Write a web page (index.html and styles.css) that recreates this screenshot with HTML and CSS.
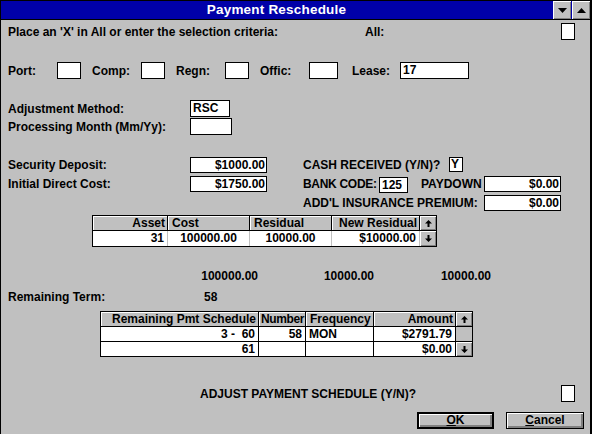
FILE: index.html
```html
<!DOCTYPE html>
<html lang="en">
<head>
    <meta charset="UTF-8">
    <title>Payment Reschedule</title>
    <link rel="stylesheet" href="styles.css">
</head>
<body>
<div class="window">
    <div class="titlebar">
        <div class="title">Payment Reschedule</div>
        <div class="tb-btn">
            <svg width="9" height="5" viewBox="0 0 9 5"><path d="M0 0H9L4.5 5Z" fill="#000"/></svg>
        </div>
        <div class="tb-btn">
            <svg width="9" height="5" viewBox="0 0 9 5"><path d="M0 5H9L4.5 0Z" fill="#000"/></svg>
        </div>
    </div>

    <div class="content">
        <div class="row r-criteria">
            <span class="lbl w-criteria">Place an 'X' in All or enter the selection criteria:</span>
            <span class="lbl w-all">All:</span>
            <span class="field f-check"></span>
        </div>

        <div class="row r-keys">
            <span class="lbl w-key">Port:</span><span class="field f-small"></span>
            <span class="lbl w-key">Comp:</span><span class="field f-small"></span>
            <span class="lbl w-key">Regn:</span><span class="field f-small"></span>
            <span class="lbl w-key">Offic:</span><span class="field f-offic"></span>
            <span class="lbl w-lease">Lease:</span><span class="field f-lease">17</span>
        </div>

        <div class="row r-method">
            <span class="lbl w-left">Adjustment Method:</span><span class="field f-method">RSC</span>
        </div>
        <div class="row r-month">
            <span class="lbl w-left">Processing Month (Mm/Yy):</span><span class="field f-month"></span>
        </div>

        <div class="row r-deposit">
            <span class="lbl w-left">Security Deposit:</span><span class="field f-money">$1000.00</span>
            <span class="lbl w-cash">CASH RECEIVED (Y/N)?</span><span class="field f-yn">Y</span>
        </div>
        <div class="row r-direct">
            <span class="lbl w-left">Initial Direct Cost:</span><span class="field f-money">$1750.00</span>
            <span class="lbl w-bank">BANK CODE:</span><span class="field f-bank">125</span>
            <span class="lbl w-paydown">PAYDOWN</span><span class="field f-money">$0.00</span>
        </div>
        <div class="row r-insurance">
            <span class="lbl w-ins">ADD'L INSURANCE PREMIUM:</span><span class="field f-money f-ins">$0.00</span>
        </div>

        <div class="grid grid-assets">
            <div class="hcell right">Asset</div>
            <div class="hcell">Cost</div>
            <div class="hcell">Residual</div>
            <div class="hcell right">New Residual</div>
            <div class="sbtn"><svg width="7" height="7" viewBox="0 0 7 7"><path d="M3.5 0L7 3.5H4.5V7H2.5V3.5H0Z" fill="#000"/></svg></div>

            <div class="dcell right">31</div>
            <div class="dcell center">100000.00</div>
            <div class="dcell center">10000.00</div>
            <div class="dcell right">$10000.00</div>
            <div class="sbtn"><svg width="7" height="7" viewBox="0 0 7 7"><path d="M3.5 7L7 3.5H4.5V0H2.5V3.5H0Z" fill="#000"/></svg></div>
        </div>

        <div class="row r-totals">
            <span class="tot tot-cost">100000.00</span>
            <span class="tot tot-res">10000.00</span>
            <span class="tot tot-new">10000.00</span>
        </div>
        <div class="row r-term">
            <span class="lbl w-term">Remaining Term:</span><span class="lbl">58</span>
        </div>

        <div class="grid grid-sched">
            <div class="hcell right">Remaining Pmt Schedule</div>
            <div class="hcell right tight">Number</div>
            <div class="hcell">Frequency</div>
            <div class="hcell right">Amount</div>
            <div class="sbtn"><svg width="7" height="7" viewBox="0 0 7 7"><path d="M3.5 0L7 3.5H4.5V7H2.5V3.5H0Z" fill="#000"/></svg></div>

            <div class="dcell right pre">3 -  60</div>
            <div class="dcell right">58</div>
            <div class="dcell">MON</div>
            <div class="dcell right">$2791.79</div>
            <div class="strack"></div>

            <div class="dcell right">61</div>
            <div class="dcell"></div>
            <div class="dcell"></div>
            <div class="dcell right">$0.00</div>
            <div class="sbtn"><svg width="7" height="7" viewBox="0 0 7 7"><path d="M3.5 7L7 3.5H4.5V0H2.5V3.5H0Z" fill="#000"/></svg></div>
        </div>

        <div class="row r-adjust">
            <span class="lbl w-adjust">ADJUST PAYMENT SCHEDULE (Y/N)?</span>
            <span class="field f-check"></span>
        </div>

        <div class="row r-buttons">
            <button class="btn btn-default"><u>O</u>K</button>
            <button class="btn"><u>C</u>ancel</button>
        </div>
    </div>
</div>
</body>
</html>
```

FILE: styles.css
```css
body {
    margin: 0;
    background-color: #c0c0c0;
    font-family: "Liberation Sans", Arial, sans-serif;
    font-weight: bold;
    font-size: 12px;
    color: #000;
}
.window {
    width: 592px;
    height: 434px;
    box-sizing: border-box;
    border-top: 1px solid #000;
    border-left: 1px solid #000;
    border-right: 2px solid #000;
    background-color: #c0c0c0;
    overflow: hidden;
}

/* title bar */
.titlebar {
    display: flex;
    height: 18px;
    background-color: #0000a8;
    border-bottom: 1px solid #000;
}
.title {
    flex: 1;
    text-align: center;
    color: #fff;
    font-size: 13.5px;
    line-height: 18px;
    letter-spacing: 0.2px;
}
.tb-btn {
    width: 18px;
    height: 18px;
    box-sizing: border-box;
    margin-left: 1px;
    background-color: #c0c0c0;
    box-shadow: inset 1px 1px 0 #fff, inset -1px -1px 0 #808080;
    display: flex;
    align-items: center;
    justify-content: center;
}

/* content rows */
.content {
    padding-left: 7px;
}
.row {
    display: flex;
    align-items: center;
    white-space: nowrap;
}
.lbl {
    flex-shrink: 0;
}
.field {
    flex-shrink: 0;
    box-sizing: border-box;
    height: 17px;
    line-height: 15px;
    background-color: #fff;
    border: 1px solid #000;
    padding: 0 2px;
}

.r-criteria { margin-top: 3px; height: 17px; }
.w-criteria { width: 357px; }
.w-all { width: 196px; }
.f-check { width: 14px; }

.r-keys { margin-top: 22px; height: 17px; }
.w-key { width: 49px; }
.w-key + .field { margin-right: 11px; }
.f-small { width: 24px; }
.w-key + .f-offic { width: 29px; margin-right: 14px; }
.w-lease { width: 48px; }
.f-lease { width: 69px; }

.w-left { width: 182px; }
.r-method { margin-top: 21px; height: 17px; }
.f-method { width: 40px; }
.r-month { margin-top: 1px; height: 17px; }
.f-month { width: 42px; }

.r-deposit { margin-top: 22px; height: 17px; align-items: flex-start; line-height: 16px; }
.r-direct { margin-top: 2px; height: 17px; align-items: flex-start; line-height: 16px; }
.r-insurance { margin-top: 2px; height: 16px; }
.f-money {
    width: 77px;
    height: 16px;
    text-align: right;
    padding: 0 1px;
    line-height: 14px;
}
.f-ins { height: 16px; }
.w-cash { width: 146px; margin-left: 36px; }
.f-yn { width: 14px; height: 15px; line-height: 13px; padding: 0 1px; }
.w-bank { width: 76px; margin-left: 36px; letter-spacing: -0.3px; }
.f-bank { width: 29px; height: 16px; line-height: 14px; margin-top: 1px; }
.w-paydown { width: 63px; margin-left: 13px; }
.w-ins { width: 181px; margin-left: 295px; }

/* grids */
.grid {
    display: grid;
    width: fit-content;
    border: 1px solid #000;
    background-color: #fff;
}
.grid-assets {
    margin-top: 4px;
    margin-left: 84px;
    grid-template-columns: 75px 82px 82px 88px 16px;
    grid-template-rows: 15px 15px;
}
.grid-sched {
    margin-top: 6px;
    margin-left: 92px;
    grid-template-columns: 158px 47px 68px 82px 16px;
    grid-template-rows: 15px 15px 14px;
}
.hcell {
    box-sizing: border-box;
    background-color: #c0c0c0;
    border-right: 1px solid #000;
    border-bottom: 1px solid #000;
    box-shadow: inset 1px 1px 0 #fff;
    padding: 0 2px 0 4px;
    line-height: 14px;
    overflow: hidden;
}
.hcell.tight {
    padding: 0 1px;
    letter-spacing: -0.4px;
}
.dcell {
    box-sizing: border-box;
    border-right: 1px solid #c0c0c0;
    padding: 0 3px 0 3px;
    line-height: 15px;
    overflow: hidden;
}
.grid-sched .dcell {
    border-right-color: #000;
    border-bottom: 1px solid #000;
    line-height: 14px;
}
.grid-sched .dcell:nth-last-child(-n+5) {
    border-bottom: none;
}
.right { text-align: right; }
.center { text-align: center; }
.pre { white-space: pre; }
.sbtn {
    box-sizing: border-box;
    background-color: #c0c0c0;
    box-shadow: inset 1px 1px 0 #fff, inset -1px -1px 0 #808080;
    display: flex;
    align-items: center;
    justify-content: center;
}
.grid-assets .hcell + .sbtn,
.grid-sched .hcell + .sbtn {
    border-bottom: 1px solid #000;
}
.strack {
    background-color: #c0c0c0;
    border-bottom: 1px solid #000;
}

/* totals */
.r-totals { margin-top: 21px; height: 16px; }
.tot { text-align: right; flex-shrink: 0; }
.tot-cost { width: 250px; }
.tot-res { width: 116px; }
.tot-new { width: 117px; }
.r-term { margin-top: 5px; height: 16px; }
.w-term { width: 196px; }

.r-adjust { margin-top: 28px; height: 17px; }
.w-adjust { width: 361px; margin-left: 192px; }

/* buttons */
.r-buttons {
    margin-top: 10px;
    padding-left: 409px;
    gap: 12px;
}
.btn {
    box-sizing: border-box;
    width: 78px;
    height: 17px;
    padding: 0;
    font: inherit;
    line-height: 13px;
    color: #000;
    background-color: #c0c0c0;
    border: 1px solid #000;
    box-shadow: inset 1px 1px 0 #fff, inset -2px -2px 0 #808080;
}
.btn-default {
    width: 77px;
    border-width: 2px;
}
```
